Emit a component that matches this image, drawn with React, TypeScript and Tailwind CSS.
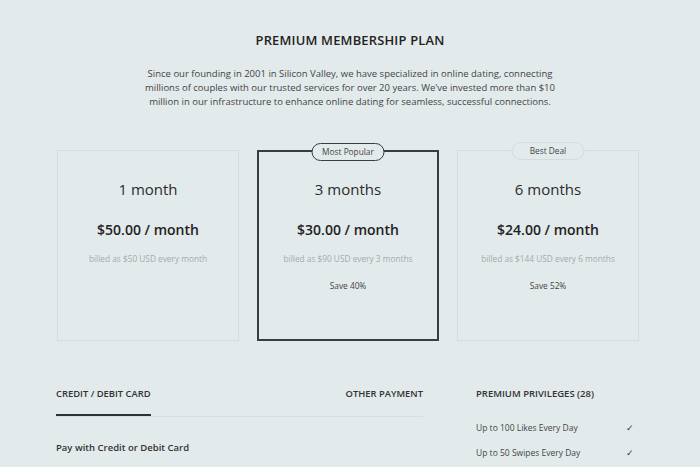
const plans = [
  { name: "1 month", price: "$50.00 / month", billed: "billed as $50 USD every month", save: "", badge: "", featured: false },
  { name: "3 months", price: "$30.00 / month", billed: "billed as $90 USD every 3 months", save: "Save 40%", badge: "Most Popular", featured: true },
  { name: "6 months", price: "$24.00 / month", billed: "billed as $144 USD every 6 months", save: "Save 52%", badge: "Best Deal", featured: false },
];

const privileges = ["Up to 100 Likes Every Day", "Up to 50 Swipes Every Day"];

function PlanCard({ plan }: { plan: (typeof plans)[number] }) {
  return (
    <div
      className={`relative flex h-[191px] w-[182px] flex-col items-center ${
        plan.featured ? "border-2 border-[#3a3d40]" : "border border-[#d3dcde]"
      }`}
    >
      {plan.badge && (
        <span
          className={`absolute left-1/2 top-[-9px] flex h-[18px] w-[73px] -translate-x-1/2 items-center justify-center rounded-full bg-[#e3eaeb] text-[8.3px] text-[#444] ${
            plan.featured ? "border border-[#3a3d40]" : "border border-[#d3dcde]"
          }`}
        >
          {plan.badge}
        </span>
      )}
      <div className={`${plan.featured ? "mt-[27px]" : "mt-[28px]"} text-[15px] leading-5 text-[#2a2c2e]`}>{plan.name}</div>
      <div className="mt-[21px] text-[14px] font-semibold leading-5 text-[#222]">{plan.price}</div>
      <div className="mt-[13px] text-[8.3px] leading-3 text-[#a4abad]">{plan.billed}</div>
      {plan.save && <div className="mt-[15px] text-[8.3px] leading-3 text-[#444]">{plan.save}</div>}
    </div>
  );
}

export default function App() {
  return (
    <div
      className="h-[467px] w-[700px] overflow-hidden bg-[#e3eaeb]"
      style={{ fontFamily: '"Open Sans", "Liberation Sans", sans-serif' }}
    >
      <div className="flex flex-col items-center pt-[30px]">
        <h1 className="text-[12.9px] font-semibold leading-5 tracking-[0.2px] text-[#222]">PREMIUM MEMBERSHIP PLAN</h1>
        <p className="mt-[17px] w-[430px] text-center text-[9.5px] leading-[14px] text-[#444]">
          Since our founding in 2001 in Silicon Valley, we have specialized in online dating, connecting millions of
          couples with our trusted services for over 20 years. We've invested more than $10 million in our
          infrastructure to enhance online dating for seamless, successful connections.
        </p>
      </div>

      <div className="ml-[57px] mt-[41px] flex gap-[18px]">
        {plans.map((p) => (
          <PlanCard key={p.name} plan={p} />
        ))}
      </div>

      <div className="ml-[56px] mt-[46px] flex">
        <div className="w-[367px]">
          <div className="flex justify-between border-b border-[#d6dfe1] text-[9.4px] font-semibold text-[#333]">
            <div className="flex flex-col">
              <span className="leading-[14px]">CREDIT / DEBIT CARD</span>
              <span className="mt-[13px] h-[2px] w-[95px] bg-[#2f3235]" />
            </div>
            <span className="leading-[14px]">OTHER PAYMENT</span>
          </div>
          <div className="mt-[24px] text-[9.5px] font-semibold leading-[14px] text-[#333]">Pay with Credit or Debit Card</div>
        </div>
        <div className="ml-[53px] w-[158px]">
          <div className="text-[9.5px] font-semibold leading-[14px] text-[#333]">PREMIUM PRIVILEGES (28)</div>
          <div className="mt-[20px] flex flex-col gap-[11px]">
            {privileges.map((t) => (
              <div key={t} className="flex items-center justify-between text-[8.5px] leading-[14px] text-[#444]">
                <span>{t}</span>
                <span className="text-[9px] text-[#333]">✓</span>
              </div>
            ))}
          </div>
        </div>
      </div>
    </div>
  );
}
